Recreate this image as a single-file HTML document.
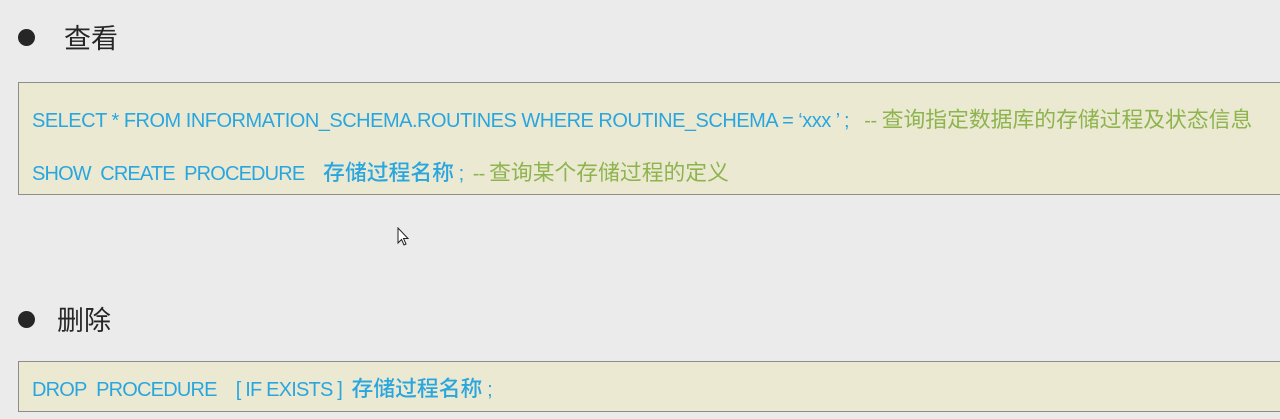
<!DOCTYPE html>
<html><head><meta charset="utf-8"><style>
body{margin:0;width:1280px;height:419px;background:#ebebeb;position:relative;overflow:hidden;font-family:"Liberation Sans","Noto Sans CJK SC",sans-serif;}
.dot{position:absolute;width:17px;height:17px;border-radius:50%;background:#262626;}
.h{position:absolute;font-family:"Noto Sans CJK SC",sans-serif;font-size:27px;color:#262626;line-height:1;}
.box{position:absolute;left:18px;width:1300px;background:#ece9d3;border:1px solid #8c8c88;}
.l{position:absolute;left:32px;white-space:nowrap;font-size:20px;color:#2aa6df;line-height:1;letter-spacing:-0.5px;}
.c{font-family:"Noto Sans CJK SC",sans-serif;font-size:21.8px;letter-spacing:0;}
.b{font-weight:500;}
.g{color:#8db44d;}
</style></head><body>
<div class="dot" style="left:18px;top:29px"></div>
<div class="h" style="left:64px;top:23px">查看</div>
<div class="box" style="top:82px;height:111px"></div>
<div class="l" style="top:108px">SELECT * FROM INFORMATION_SCHEMA.ROUTINES WHERE ROUTINE_SCHEMA = ‘xxx ’ ;&nbsp;&nbsp; <span class="g">-- <span class="c">查询指定数据库的存储过程及状态信息</span></span></div>
<div class="l" style="top:161px;letter-spacing:-0.85px">SHOW&nbsp; CREATE&nbsp; PROCEDURE&nbsp;&nbsp;&nbsp; <span class="c b">存储过程名称</span> ;&nbsp; <span class="g">-- <span class="c">查询某个存储过程的定义</span></span></div>
<div class="dot" style="left:18px;top:311px"></div>
<div class="h" style="left:57px;top:305px">删除</div>
<div class="box" style="top:361px;height:49px"></div>
<div class="l" style="top:377px;letter-spacing:-0.8px">DROP&nbsp; PROCEDURE&nbsp;&nbsp;&nbsp; [ IF EXISTS ]&nbsp; <span class="c b">存储过程名称</span> ;</div>
<svg style="position:absolute;left:397px;top:227px" width="14" height="20" viewBox="0 0 14 20"><path d="M1 1 L1 16 L4.5 12.5 L7 18 L9 17 L6.5 11.5 L11 11.5 Z" fill="#fff" stroke="#222" stroke-width="1"/></svg>
</body></html>
